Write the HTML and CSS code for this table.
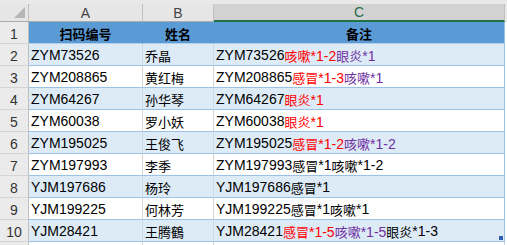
FILE: index.html
```html
<!DOCTYPE html>
<html lang="zh">
<head>
<meta charset="utf-8">
<link rel="stylesheet" href="styles.css">
</head>
<body>
<div class="sheet">
  <div class="topstrip"></div>
  <div class="row colhead">
    <div class="rh corner"><span class="tri"></span></div>
    <div class="ca ch">A</div>
    <div class="cb ch">B</div>
    <div class="cc ch sel">C</div>
    <div class="rest"></div>
  </div>
  <div class="row head">
    <div class="rh">1</div>
    <div class="ca center"><span class="cj b">扫码编号</span></div>
    <div class="cb center"><span class="cj b">姓名</span></div>
    <div class="cc center"><span class="cj b">备注</span></div>
    <div class="rest"></div>
  </div>
  <div class="row alt">
    <div class="rh">2</div>
    <div class="ca">ZYM73526</div>
    <div class="cb"><span class="cj">乔晶</span></div>
    <div class="cc">ZYM73526<span class="red"><span class="cj">咳嗽</span>*1-2</span><span class="pur"><span class="cj">眼炎</span>*1</span></div>
    <div class="rest"></div>
  </div>
  <div class="row">
    <div class="rh">3</div>
    <div class="ca">ZYM208865</div>
    <div class="cb"><span class="cj">黄红梅</span></div>
    <div class="cc">ZYM208865<span class="red"><span class="cj">感冒</span>*1-3</span><span class="pur"><span class="cj">咳嗽</span>*1</span></div>
    <div class="rest"></div>
  </div>
  <div class="row alt">
    <div class="rh">4</div>
    <div class="ca">ZYM64267</div>
    <div class="cb"><span class="cj">孙华琴</span></div>
    <div class="cc">ZYM64267<span class="red"><span class="cj">眼炎</span>*1</span></div>
    <div class="rest"></div>
  </div>
  <div class="row">
    <div class="rh">5</div>
    <div class="ca">ZYM60038</div>
    <div class="cb"><span class="cj">罗小妖</span></div>
    <div class="cc">ZYM60038<span class="red"><span class="cj">眼炎</span>*1</span></div>
    <div class="rest"></div>
  </div>
  <div class="row alt">
    <div class="rh">6</div>
    <div class="ca">ZYM195025</div>
    <div class="cb"><span class="cj">王俊飞</span></div>
    <div class="cc">ZYM195025<span class="red"><span class="cj">感冒</span>*1-2</span><span class="pur"><span class="cj">咳嗽</span>*1-2</span></div>
    <div class="rest"></div>
  </div>
  <div class="row">
    <div class="rh">7</div>
    <div class="ca">ZYM197993</div>
    <div class="cb"><span class="cj">李季</span></div>
    <div class="cc">ZYM197993<span class="cj">感冒</span>*1<span class="cj">咳嗽</span>*1-2</div>
    <div class="rest"></div>
  </div>
  <div class="row alt">
    <div class="rh">8</div>
    <div class="ca">YJM197686</div>
    <div class="cb"><span class="cj">杨玲</span></div>
    <div class="cc">YJM197686<span class="cj">感冒</span>*1</div>
    <div class="rest"></div>
  </div>
  <div class="row">
    <div class="rh">9</div>
    <div class="ca">YJM199225</div>
    <div class="cb"><span class="cj">何林芳</span></div>
    <div class="cc">YJM199225<span class="cj">感冒</span>*1<span class="cj">咳嗽</span>*1</div>
    <div class="rest"></div>
  </div>
  <div class="row alt">
    <div class="rh">10</div>
    <div class="ca">YJM28421</div>
    <div class="cb"><span class="cj">王腾鶴</span></div>
    <div class="cc last">YJM28421<span class="red"><span class="cj">感冒</span>*1-5</span><span class="pur"><span class="cj">咳嗽</span>*1-5</span><span class="cj">眼炎</span>*1-3<span class="handle"></span></div>
    <div class="rest"></div>
  </div>
  <div class="row blank">
    <div class="rh"></div>
    <div class="ca"></div>
    <div class="cb"></div>
    <div class="cc"></div>
    <div class="rest"></div>
  </div>
</div>
</body>
</html>
```

FILE: styles.css
```css
html, body {
  margin: 0;
  padding: 0;
  background: #ffffff;
}
body {
  width: 507px;
  height: 245px;
  overflow: hidden;
  font-family: "Liberation Sans", "Noto Sans CJK SC", sans-serif;
  font-size: 14px;
  color: #000;
}
.sheet {
  display: flex;
  flex-direction: column;
  height: 245px;
  overflow: hidden;
}
.topstrip {
  height: 4px;
  flex: none;
  background: #e9e9e9;
}
.row {
  display: flex;
  height: 22px;
  flex: none;
}
.row > div {
  box-sizing: border-box;
  height: 100%;
  display: flex;
  align-items: center;
  white-space: nowrap;
  overflow: hidden;
}
.rh {
  width: 29px;
  justify-content: center;
  background: #ebebeb;
  border-right: 1px solid #bfbfbf;
  border-bottom: 1px solid #d5d5d5;
  color: #333;
  font-size: 14px;
  padding-top: 2px;
}
.ca { width: 114px; }
.cb { width: 71px; }
.cc { width: 291px; position: relative; }
.rest { flex: 1; background: #fff; }
.ca, .cb, .cc {
  padding-left: 2px;
  border-right: 1px solid #d4d4d4;
  border-bottom: 1px solid #9bc2e6;
  padding-top: 1px;
}
.cc { border-right-color: #9bc2e6; }

.colhead { height: 18px; }
.colhead > div {
  background: #e6e6e6;
  border-bottom: 1px solid #ababab;
  color: #444;
  font-size: 14px;
  padding-top: 0;
}
.colhead .ch {
  justify-content: center;
  padding-left: 0;
  border-right: 1px solid #c0c0c0;
}
.colhead .sel {
  background: #d2d2d2;
  border-bottom: 2px solid #217346;
  color: #2b6a44;
}
.colhead .rest { background: #e9e9e9; border-bottom: none; }
.corner {
  position: relative;
  border-right: 1px solid #bfbfbf;
}
.tri {
  position: absolute;
  right: 3px;
  bottom: 3px;
  width: 0;
  height: 0;
  border-style: solid;
  border-width: 0 0 11px 11px;
  border-color: transparent transparent #b5b5b5 transparent;
}

.head .ca, .head .cb, .head .cc {
  background: #5b9bd5;
  border-right-color: #5b9bd5;
  border-bottom-color: #b4cfea;
}
.head .cc { border-right-color: #9bc2e6; }
.center { justify-content: center; padding-left: 0 !important; }

.alt .ca, .alt .cb, .alt .cc { background: #ddebf7; }
.alt .ca, .alt .cb { border-right-color: #cfdbe8; }

.cj {
  font-family: "Noto Sans CJK SC", sans-serif;
  font-size: 13px;
}
.b { font-weight: bold; }
.red { color: #ff0000; }
.pur { color: #7030a0; }

.row.blank { height: 3px; }
.blank > div { border-bottom: none !important; }
.blank .cc { border-right-color: #d4d4d4; }

.handle {
  position: absolute;
  right: 1px;
  bottom: 1px;
  width: 4px;
  height: 4px;
  background: #2e5fa8;
}
```
